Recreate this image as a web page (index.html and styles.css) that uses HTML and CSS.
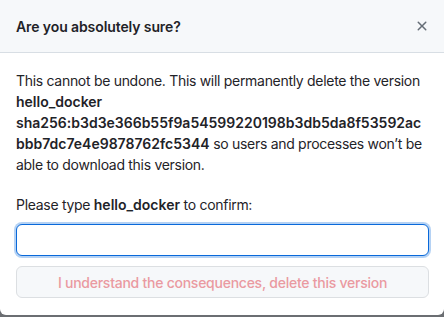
FILE: index.html
```html
<!DOCTYPE html>
<html lang="en">
<head>
<meta charset="utf-8">
<title>Are you absolutely sure?</title>
<link rel="stylesheet" href="styles.css">
</head>
<body>
<div class="dialog">
  <header class="dialog-header">
    <h1 class="dialog-title">Are you absolutely sure?</h1>
    <button class="close" aria-label="Close">
      <svg width="16" height="16" viewBox="0 0 16 16" aria-hidden="true"><path fill="currentColor" d="M3.72 3.72a.75.75 0 0 1 1.06 0L8 6.94l3.22-3.22a.749.749 0 0 1 1.275.326.749.749 0 0 1-.215.734L9.06 8l3.22 3.22a.749.749 0 0 1-.326 1.275.749.749 0 0 1-.734-.215L8 9.06l-3.22 3.22a.751.751 0 0 1-1.042-.018.751.751 0 0 1-.018-1.042L6.94 8 3.72 4.78a.75.75 0 0 1 0-1.06Z"/></svg>
    </button>
  </header>
  <div class="dialog-body">
    <p class="warning">This cannot be undone. This will permanently delete the version <strong>hello_docker</strong> <strong class="hash">sha256:b3d3e366b55f9a54599220198b3db5da8f53592acbbb7dc7e4e9878762fc5344</strong> so users and processes won’t be able to download this version.</p>
    <label class="confirm-label" for="confirm">Please type <strong>hello_docker</strong> to confirm:</label>
    <input id="confirm" class="confirm-input" type="text" autofocus>
    <button class="danger-btn" disabled>I understand the consequences, delete this version</button>
  </div>
</div>
</body>
</html>
```

FILE: styles.css
```css
html, body {
  margin: 0;
  padding: 0;
}
body {
  background: #6b6e72;
  font-family: Inter, "Noto Sans", "Liberation Sans", sans-serif;
  font-size: 14px;
  line-height: 21px;
  color: #1f2328;
  letter-spacing: -0.3px;
}
.dialog {
  width: 444px;
  height: 315px;
  background: #ffffff;
  border-radius: 0 0 6px 6px;
  overflow: hidden;
  display: flex;
  flex-direction: column;
}
.dialog-header {
  height: 52px;
  box-sizing: content-box;
  background: #f6f8fa;
  border-bottom: 1px solid #d8dee4;
  display: flex;
  align-items: center;
  justify-content: space-between;
  padding: 0 14px 0 16px;
}
.dialog-title {
  margin: 0;
  font-size: 14px;
  font-weight: 600;
  line-height: 21px;
  letter-spacing: -0.1px;
}
.close {
  border: 0;
  background: none;
  padding: 0;
  width: 16px;
  height: 16px;
  color: #656d76;
  display: flex;
}
.dialog-body {
  padding: 17px 15px 16px 16px;
  display: flex;
  flex-direction: column;
}
.warning {
  margin: 0 0 19px;
  overflow-wrap: break-word;
}
.warning strong, .confirm-label strong {
  font-weight: 600;
  letter-spacing: 0;
}
.confirm-label {
  display: block;
  margin-bottom: 9px;
}
.confirm-input {
  box-sizing: border-box;
  height: 32px;
  width: 100%;
  border: 1px solid #0969da;
  border-radius: 6px;
  box-shadow: 0 0 0 2px rgba(9, 105, 218, 0.3);
  outline: none;
  padding: 0 12px;
  font: inherit;
  margin: 0 0 10px;
}
.danger-btn {
  box-sizing: border-box;
  height: 32px;
  width: 100%;
  border: 1px solid #dcdfe2;
  border-radius: 6px;
  background: #f6f8fa;
  color: #ea9aa1;
  font: inherit;
  font-weight: 500;
  letter-spacing: -0.25px;
}
```
